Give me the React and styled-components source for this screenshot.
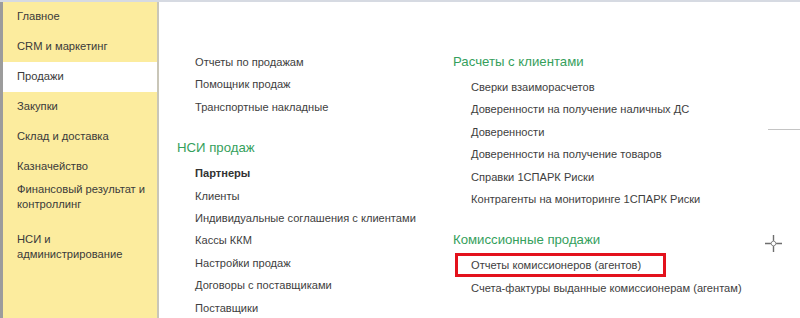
import React from "react";
import styled, { createGlobalStyle } from "styled-components";

const GlobalStyle = createGlobalStyle`
	body {
		margin: 0;
		background: #ffffff;
		font-family: "Liberation Sans", Arial, sans-serif;
	}
`;

const sections = [
	{ title: "Главное" },
	{ title: "CRM и маркетинг" },
	{ title: "Продажи", active: true },
	{ title: "Закупки" },
	{ title: "Склад и доставка" },
	{ title: "Казначейство" },
	{ title: "Финансовый результат и контроллинг", wrap: true },
	{ title: "НСИ и администрирование", wrap: true },
];

const leftColumn = [
	{
		items: [
			{ label: "Отчеты по продажам" },
			{ label: "Помощник продаж" },
			{ label: "Транспортные накладные" },
		],
	},
	{
		heading: "НСИ продаж",
		items: [
			{ label: "Партнеры", bold: true },
			{ label: "Клиенты" },
			{ label: "Индивидуальные соглашения с клиентами" },
			{ label: "Кассы ККМ" },
			{ label: "Настройки продаж" },
			{ label: "Договоры с поставщиками" },
			{ label: "Поставщики" },
		],
	},
];

const rightColumn = [
	{
		heading: "Расчеты с клиентами",
		items: [
			{ label: "Сверки взаиморасчетов" },
			{ label: "Доверенности на получение наличных ДС" },
			{ label: "Доверенности" },
			{ label: "Доверенности на получение товаров" },
			{ label: "Справки 1СПАРК Риски" },
			{ label: "Контрагенты на мониторинге 1СПАРК Риски" },
		],
	},
	{
		heading: "Комиссионные продажи",
		items: [
			{ label: "Отчеты комиссионеров (агентов)", marked: true },
			{ label: "Счета-фактуры выданные комиссионерам (агентам)" },
		],
	},
];

const Group = ({ group, first }) => (
	<>
		{group.heading && <Heading $first={first}>{group.heading}</Heading>}
		{group.items.map((item, index) => (
			<Link key={index} $bold={item.bold} $marked={item.marked}>
				{item.label}
			</Link>
		))}
	</>
);

const App = () => {
	return (
		<>
			<GlobalStyle />
			<Screen>
				<Sidebar>
					{sections.map((section, index) => (
						<SectionItem
							key={index}
							$active={section.active}
							$wrap={section.wrap}
						>
							{section.title}
						</SectionItem>
					))}
				</Sidebar>
				<Content>
					<Column>
						{leftColumn.map((group, index) => (
							<Group key={index} group={group} first={index === 0} />
						))}
					</Column>
					<Column $wide>
						{rightColumn.map((group, index) => (
							<Group key={index} group={group} first={index === 0} />
						))}
					</Column>
					<EdgeLine />
					<Cursor width="19" height="19" viewBox="0 0 19 19">
						<path
							d="M9.5 1v6M9.5 12v6M1 9.5h6M12 9.5h6"
							stroke="#6e6e6e"
							strokeWidth="1.4"
						/>
						<circle
							cx="9.5"
							cy="9.5"
							r="2.3"
							fill="#fff"
							stroke="#8a8a8a"
							strokeWidth="1"
						/>
					</Cursor>
				</Content>
			</Screen>
		</>
	);
};

export default App;

const Screen = styled.div`
	display: flex;
	width: 800px;
	height: 318px;
	overflow: hidden;
	border-top: 2px solid #d6dae2;
	box-sizing: border-box;
`;

const Sidebar = styled.nav`
	width: 154px;
	flex-shrink: 0;
	background: #fcec9e;
	border-left: 3px solid #9c9c9c;
	border-right: 2px solid #c9c6b8;
	display: flex;
	flex-direction: column;
`;

const SectionItem = styled.div`
	padding: ${(p) => (p.$wrap ? "0 6px 20px 14px" : "7px 6px 8px 14px")};
	font-size: 11.2px;
	line-height: 15px;
	color: #3a3a3a;
	background: ${(p) => (p.$active ? "#ffffff" : "transparent")};
`;

const Content = styled.main`
	position: relative;
	flex: 1;
	display: flex;
	padding: 49px 0 0 18px;
	color: #404040;
`;

const Column = styled.div`
	width: ${(p) => (p.$wide ? "330px" : "276px")};
	display: flex;
	flex-direction: column;
`;

const Heading = styled.div`
	margin: ${(p) => (p.$first ? "0" : "19px")} 0 3px;
	font-size: 13.2px;
	line-height: 22px;
	color: #35a05c;
`;

const Link = styled.div`
	position: relative;
	align-self: flex-start;
	padding-left: 18px;
	font-size: 11.1px;
	line-height: 22.4px;
	font-weight: ${(p) => (p.$bold ? 700 : 400)};
	color: ${(p) => (p.$bold ? "#333333" : "#3e3e3e")};

	&::after {
		content: "";
		display: ${(p) => (p.$marked ? "block" : "none")};
		position: absolute;
		left: 2px;
		top: -1px;
		width: 205px;
		height: 18px;
		border: 3px solid #e3111c;
	}
`;

const EdgeLine = styled.div`
	position: absolute;
	top: 127px;
	right: 0;
	width: 32px;
	height: 1px;
	background: #c4c4c4;
`;

const Cursor = styled.svg`
	position: absolute;
	left: 605px;
	top: 232px;
`;
